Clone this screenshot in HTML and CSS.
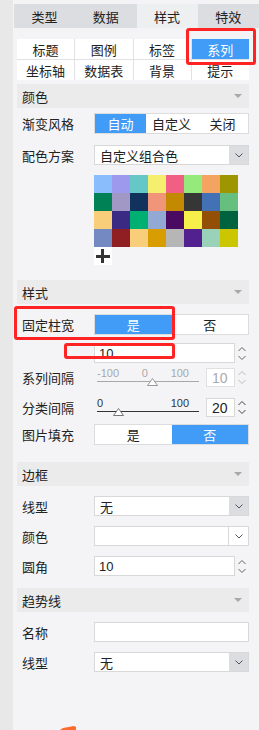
FILE: index.html
```html
<!DOCTYPE html>
<html lang="zh">
<head>
    <meta charset="UTF-8">
    <title>图表属性</title>
    <link rel="stylesheet" href="styles.css">
</head>
<body>
    <div class="panel">
        <!-- 顶部标签 -->
        <div class="tabs">
            <div class="tab">类型</div>
            <div class="tab">数据</div>
            <div class="tab active">样式</div>
            <div class="tab">特效</div>
        </div>

        <div class="content">
            <div class="subtabs">
                <div class="subtab">标题</div>
                <div class="subtab">图例</div>
                <div class="subtab">标签</div>
                <div class="subtab active">系列</div>
                <div class="subtab">坐标轴</div>
                <div class="subtab">数据表</div>
                <div class="subtab">背景</div>
                <div class="subtab">提示</div>
            </div>

            <!-- 颜色 -->
            <div class="section-head head-color">颜色<span class="caret"></span></div>
            <div class="row row-grad">
                <span class="label">渐变风格</span>
                <div class="seg">
                    <span class="on">自动</span>
                    <span>自定义</span>
                    <span>关闭</span>
                </div>
            </div>
            <div class="row row-scheme">
                <span class="label">配色方案</span>
                <div class="select">
                    <span class="val">自定义组合色</span>
                    <span class="arrow"><svg width="8" height="5" viewBox="0 0 8 5"><polyline points="0.5,0.5 4,4 7.5,0.5" fill="none" stroke="#555" stroke-width="1"/></svg></span>
                </div>
            </div>
            <div class="palette">
                <span style="background:#89bdfc"></span>
                <span style="background:#9d9aee"></span>
                <span style="background:#66c8c6"></span>
                <span style="background:#f5ef70"></span>
                <span style="background:#f25f85"></span>
                <span style="background:#94eb7b"></span>
                <span style="background:#f4a460"></span>
                <span style="background:#9e9600"></span>
                <span style="background:#008055"></span>
                <span style="background:#a298c6"></span>
                <span style="background:#12325e"></span>
                <span style="background:#f0947a"></span>
                <span style="background:#c38900"></span>
                <span style="background:#363636"></span>
                <span style="background:#4271b5"></span>
                <span style="background:#66bf7f"></span>
                <span style="background:#f8ce7a"></span>
                <span style="background:#3b2a84"></span>
                <span style="background:#00af72"></span>
                <span style="background:#92a9d4"></span>
                <span style="background:#4b0a61"></span>
                <span style="background:#f8f04a"></span>
                <span style="background:#944f06"></span>
                <span style="background:#006340"></span>
                <span style="background:#7488c1"></span>
                <span style="background:#8f1f22"></span>
                <span style="background:#f8ce7a"></span>
                <span style="background:#d89d00"></span>
                <span style="background:#b6b6b6"></span>
                <span style="background:#532090"></span>
                <span style="background:#99d2b8"></span>
                <span style="background:#cbc600"></span>
                <span class="add"></span>
            </div>

            <!-- 样式 -->
            <div class="section-head head-style">样式<span class="caret"></span></div>
            <div class="row row-fixed">
                <span class="label">固定柱宽</span>
                <div class="seg">
                    <span class="on">是</span>
                    <span>否</span>
                </div>
            </div>
            <div class="row row-width">
                <span class="label"></span>
                <div class="num">
                    <span class="box">10</span>
                    <span class="spin"><svg width="14" height="19" viewBox="0 0 14 19"><polyline points="3.5,7 7,3.5 10.5,7" fill="none" stroke="#666"/><polyline points="3.5,12 7,15.5 10.5,12" fill="none" stroke="#666"/></svg></span>
                </div>
            </div>
            <div class="row row-slider1">
                <span class="label">系列间隔</span>
                <div class="slider disabled">
                    <div class="ticks"><span>-100</span><span>0</span><span>100</span></div>
                    <div class="track"></div>
                    <svg class="thumb" style="left:50px" width="11" height="8" viewBox="0 0 11 8"><polygon points="5.5,0.5 10.5,7.5 0.5,7.5" fill="#fff" stroke="#999"/></svg>
                </div>
                <div class="num small disabled">
                    <span class="box">10</span>
                    <span class="spin"><svg width="14" height="19" viewBox="0 0 14 19"><polyline points="3.5,7 7,3.5 10.5,7" fill="none" stroke="#bbb"/><polyline points="3.5,12 7,15.5 10.5,12" fill="none" stroke="#bbb"/></svg></span>
                </div>
            </div>
            <div class="row row-slider2">
                <span class="label">分类间隔</span>
                <div class="slider">
                    <div class="ticks"><span>0</span><span>100</span></div>
                    <div class="track"></div>
                    <svg class="thumb" style="left:16px" width="11" height="8" viewBox="0 0 11 8"><polygon points="5.5,0.5 10.5,7.5 0.5,7.5" fill="#fff" stroke="#777"/></svg>
                </div>
                <div class="num small">
                    <span class="box">20</span>
                    <span class="spin"><svg width="14" height="19" viewBox="0 0 14 19"><polyline points="3.5,7 7,3.5 10.5,7" fill="none" stroke="#444"/><polyline points="3.5,12 7,15.5 10.5,12" fill="none" stroke="#444"/></svg></span>
                </div>
            </div>
            <div class="row row-fill">
                <span class="label">图片填充</span>
                <div class="seg">
                    <span>是</span>
                    <span class="on">否</span>
                </div>
            </div>

            <!-- 边框 -->
            <div class="section-head head-border">边框<span class="caret"></span></div>
            <div class="row row-first">
                <span class="label">线型</span>
                <div class="select">
                    <span class="val">无</span>
                    <span class="arrow"><svg width="8" height="5" viewBox="0 0 8 5"><polyline points="0.5,0.5 4,4 7.5,0.5" fill="none" stroke="#555" stroke-width="1"/></svg></span>
                </div>
            </div>
            <div class="row row-next">
                <span class="label">颜色</span>
                <div class="select">
                    <span class="val"></span>
                    <span class="arrow plain"><svg width="8" height="5" viewBox="0 0 8 5"><polyline points="0.5,0.5 4,4 7.5,0.5" fill="none" stroke="#555" stroke-width="1"/></svg></span>
                </div>
            </div>
            <div class="row row-next">
                <span class="label">圆角</span>
                <div class="num">
                    <span class="box">10</span>
                    <span class="spin"><svg width="14" height="19" viewBox="0 0 14 19"><polyline points="3.5,7 7,3.5 10.5,7" fill="none" stroke="#666"/><polyline points="3.5,12 7,15.5 10.5,12" fill="none" stroke="#666"/></svg></span>
                </div>
            </div>

            <!-- 趋势线 -->
            <div class="section-head head-trend">趋势线<span class="caret"></span></div>
            <div class="row row-first">
                <span class="label">名称</span>
                <div class="input"></div>
            </div>
            <div class="row row-next">
                <span class="label">线型</span>
                <div class="select">
                    <span class="val">无</span>
                    <span class="arrow"><svg width="8" height="5" viewBox="0 0 8 5"><polyline points="0.5,0.5 4,4 7.5,0.5" fill="none" stroke="#555" stroke-width="1"/></svg></span>
                </div>
            </div>
        </div>
    </div>

    <!-- 标注框 -->
    <div class="mark mark-series"></div>
    <div class="mark mark-fixed"></div>
    <div class="mark mark-width"></div>
    <svg class="corner" width="17" height="4" viewBox="0 0 17 4"><polygon points="0,4 3,2 14,0 16,1 16,4" fill="#ff6b2c"/></svg>
</body>
</html>
```

FILE: styles.css
```css
body {
    margin: 0;
    background: #e8e8e8;
    font-family: "Liberation Sans", "Noto Sans CJK SC", sans-serif;
    font-size: 13px;
    color: #222;
    position: relative;
    min-height: 730px;
    overflow: hidden;
}
.panel {
    margin-left: 13px;
    background: #f4f4f6;
    min-height: 730px;
    padding-top: 4px;
    box-sizing: border-box;
}
.tabs {
    display: flex;
    margin-left: 1px;
    height: 24px;
}
.tab {
    flex: 1;
    display: flex;
    align-items: center;
    justify-content: center;
    background: #dcdde0;
}
.tab.active {
    background: #eeeff1;
}
.content {
    padding: 0 10px 0 4px;
}
.subtabs {
    margin-top: 11px;
    display: grid;
    grid-template-columns: repeat(4, 1fr);
    grid-auto-rows: 20px;
    gap: 1px;
    background: #e2e2e4;
}
.subtab {
    background: #fff;
    display: flex;
    align-items: center;
    justify-content: center;
}
.subtab.active {
    background: #409cf7;
    color: #fff;
}
.section-head {
    height: 24px;
    background: #ebebec;
    display: flex;
    align-items: center;
    justify-content: space-between;
    padding: 0 7px 0 5px;
}
.caret {
    width: 0;
    height: 0;
    border-left: 4px solid transparent;
    border-right: 4px solid transparent;
    border-top: 4px solid #a8a8a8;
}
.head-color { margin-top: 4px; }
.head-style { margin-top: 15px; }
.head-border { margin-top: 17px; }
.head-trend { margin-top: 12px; }

.row {
    display: flex;
    align-items: center;
    height: 20px;
}
.label {
    width: 77px;
    flex: none;
    padding-left: 5px;
    box-sizing: border-box;
}
.row-grad { margin-top: 5px; height: 21px; }
.row-scheme { margin-top: 11px; }
.row-fixed { margin-top: 10px; height: 21px; }
.row-width { margin-top: 8px; }
.row-slider1 { margin-top: 5px; height: 19px; }
.row-slider2 { margin-top: 11px; height: 19px; }
.row-fill { margin-top: 7px; height: 21px; }
.row-first { margin-top: 10px; }
.row-next { margin-top: 10px; }

.seg {
    flex: 1;
    height: 100%;
    display: flex;
    background: #fff;
    border: 1px solid #dcdcdc;
    box-sizing: border-box;
}
.seg span {
    flex: 1;
    display: flex;
    align-items: center;
    justify-content: center;
}
.seg .on {
    background: #409cf7;
    color: #fff;
}

.select {
    flex: 1;
    height: 100%;
    display: flex;
    background: #fff;
    border: 1px solid #d8d8d8;
    box-sizing: border-box;
}
.select .val {
    flex: 1;
    padding-left: 5px;
    display: flex;
    align-items: center;
}
.select .arrow {
    width: 19px;
    background: #dcdde0;
    display: flex;
    align-items: center;
    justify-content: center;
}
.select .arrow.plain {
    background: #fff;
    border-left: 1px solid #d8d8d8;
}
.input {
    flex: 1;
    height: 100%;
    background: #fff;
    border: 1px solid #d8d8d8;
    box-sizing: border-box;
}

.num {
    flex: 1;
    height: 100%;
    display: flex;
}
.num .box {
    flex: 1;
    background: #fff;
    border: 1px solid #d8d8d8;
    padding-left: 4px;
    display: flex;
    align-items: center;
}
.num .spin {
    width: 14px;
    display: flex;
    align-items: center;
}
.num.small {
    flex: none;
    width: 43px;
    margin-left: 7px;
}
.num.small .box {
    padding-left: 5px;
    font-size: 14px;
}
.num.disabled .box {
    color: #aaa;
    border-color: #e0e0e0;
}

.palette {
    margin: 10px 0 0 77px;
    display: grid;
    grid-template-columns: repeat(8, 18px);
    grid-auto-rows: 18px;
}
.palette .add {
    background: #fff;
    position: relative;
}
.palette .add::before,
.palette .add::after {
    content: "";
    position: absolute;
    background: #333;
}
.palette .add::before {
    left: 2px;
    top: 8px;
    width: 14px;
    height: 3px;
}
.palette .add::after {
    left: 7px;
    top: 2px;
    width: 3px;
    height: 14px;
}

.slider {
    position: relative;
    width: 102px;
    height: 19px;
    margin-left: 3px;
    flex: none;
}
.slider .ticks {
    display: flex;
    justify-content: space-between;
    padding-right: 10px;
    font-size: 11px;
    line-height: 11px;
    color: #333;
}
.slider .track {
    position: absolute;
    left: 0;
    right: 0;
    top: 13px;
    height: 1px;
    background: #333;
}
.slider .thumb {
    position: absolute;
    top: 10px;
}
.slider.disabled .ticks {
    color: #a8a8a8;
}
.slider.disabled .track {
    background: #a8a8a8;
}

.mark {
    position: absolute;
    border: 3px solid #ff2323;
    border-radius: 3px;
    box-sizing: border-box;
}
.mark-series {
    left: 186px;
    top: 28px;
    width: 70px;
    height: 37px;
}
.mark-fixed {
    left: 14px;
    top: 306px;
    width: 161px;
    height: 34px;
}
.mark-width {
    left: 64px;
    top: 343px;
    width: 111px;
    height: 16px;
}
.corner {
    position: absolute;
    left: 60px;
    top: 726px;
}
```
